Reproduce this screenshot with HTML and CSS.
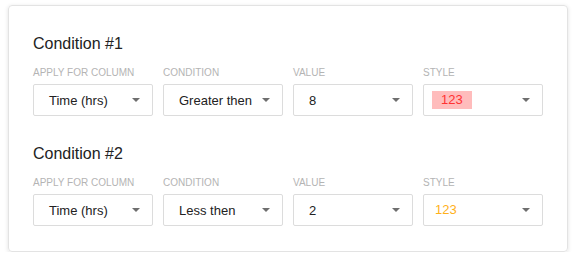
FILE: index.html
```html
<!DOCTYPE html>
<html lang="en">
  <head>
    <meta charset="UTF-8" />
    <meta name="viewport" content="width=device-width, initial-scale=1.0" />
    <title>Conditional Formatting</title>
    <link rel="stylesheet" href="styles.css">
  </head>
  <body>
    <div class="card">
      <div class="condition">
        <h2>Condition #1</h2>
        <div class="fields">
          <div class="field">
            <label>Apply for column</label>
            <div class="select">Time (hrs)<span class="arrow"></span></div>
          </div>
          <div class="field">
            <label>Condition</label>
            <div class="select">Greater then<span class="arrow"></span></div>
          </div>
          <div class="field">
            <label>Value</label>
            <div class="select">8<span class="arrow"></span></div>
          </div>
          <div class="field">
            <label>Style</label>
            <div class="select style-select">
              <span class="chip chip-red">123</span><span class="arrow"></span>
            </div>
          </div>
        </div>
      </div>

      <div class="condition">
        <h2>Condition #2</h2>
        <div class="fields">
          <div class="field">
            <label>Apply for column</label>
            <div class="select">Time (hrs)<span class="arrow"></span></div>
          </div>
          <div class="field">
            <label>Condition</label>
            <div class="select">Less then<span class="arrow"></span></div>
          </div>
          <div class="field">
            <label>Value</label>
            <div class="select">2<span class="arrow"></span></div>
          </div>
          <div class="field">
            <label>Style</label>
            <div class="select style-select">
              <span class="chip chip-orange">123</span><span class="arrow"></span>
            </div>
          </div>
        </div>
      </div>
    </div>
  </body>
</html>
```

FILE: styles.css
```css
body {
  margin: 0;
  font-family: "Liberation Sans", Arial, sans-serif;
  background-color: #ffffff;
  color: #222222;
}

.card {
  box-sizing: border-box;
  width: 560px;
  margin: 5px 0 0 8px;
  padding: 28px 24px 25px;
  border: 1px solid #e3e3e3;
  border-radius: 4px;
  box-shadow: 0 1px 4px rgba(0, 0, 0, 0.12);
}

.condition + .condition {
  margin-top: 28px;
}

h2 {
  margin: 0 0 13px;
  font-size: 16px;
  line-height: 20px;
  font-weight: normal;
  color: #222222;
}

.fields {
  display: grid;
  grid-template-columns: repeat(4, 120px);
  gap: 10px;
}

label {
  display: block;
  margin-bottom: 5px;
  font-size: 10px;
  line-height: 12px;
  text-transform: uppercase;
  color: #b4b4b4;
}

.select {
  box-sizing: border-box;
  height: 32px;
  display: flex;
  align-items: center;
  justify-content: space-between;
  padding: 0 12px 0 15px;
  border: 1px solid #dcdcdc;
  border-radius: 2px;
  font-size: 13px;
  color: #222222;
}

.style-select {
  padding-left: 8px;
}

.arrow {
  width: 0;
  height: 0;
  border-left: 4px solid transparent;
  border-right: 4px solid transparent;
  border-top: 4px solid #6e6e6e;
}

.chip {
  line-height: 18px;
}

.chip-red {
  padding: 0 9px;
  background-color: #ffbcbc;
  color: #ff3333;
}

.chip-orange {
  padding: 0 3px;
  color: #ffb11a;
}
```
